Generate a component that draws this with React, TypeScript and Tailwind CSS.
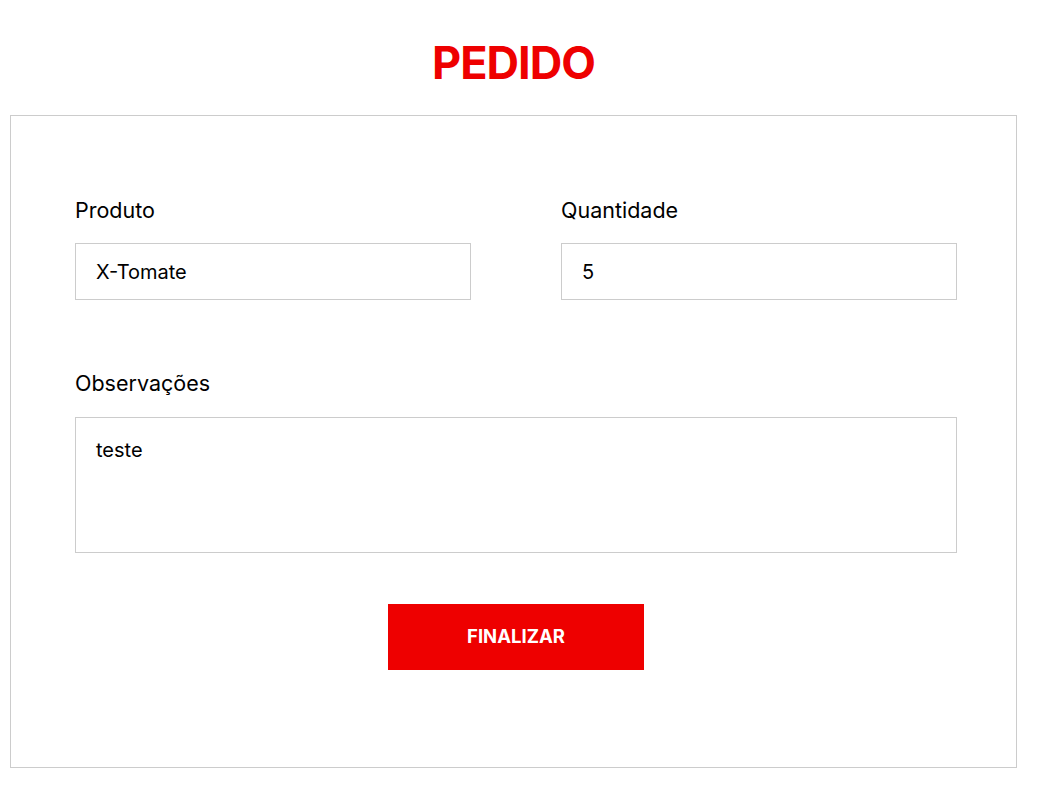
export default function App() {
  return (
    <div className="min-h-screen bg-white font-['Inter',sans-serif] text-black">
      <div className="ml-[10px] w-[1007px]">
        <h1 className="pt-[35px] text-center text-[45px] font-bold leading-[56px] tracking-[-1px] text-[#ee0000]">
          PEDIDO
        </h1>
        <form
          className="mt-[24px] border border-[#cccccc] pb-[97px] pl-[64px] pt-[79px]"
          onSubmit={(e) => e.preventDefault()}
        >
          <div className="w-[882px]">
            <div className="grid grid-cols-2 gap-x-[90px]">
              <div className="flex flex-col">
                <label className="mb-[18px] text-[21.5px] leading-[30px]">Produto</label>
                <input
                  defaultValue="X-Tomate"
                  className="h-[57px] border border-[#cccccc] px-[20px] text-[20px] outline-none"
                />
              </div>
              <div className="flex flex-col">
                <label className="mb-[18px] text-[21.5px] leading-[30px]">Quantidade</label>
                <input
                  defaultValue="5"
                  className="h-[57px] border border-[#cccccc] px-[20px] text-[20px] outline-none"
                />
              </div>
            </div>
            <div className="mt-[68px] flex flex-col">
              <label className="mb-[19px] text-[21.5px] leading-[30px]">Observações</label>
              <textarea
                defaultValue="teste"
                className="h-[136px] resize-none border border-[#cccccc] px-[20px] pb-[20px] pt-[19px] text-[20px] leading-[26px] outline-none"
              />
            </div>
            <div className="mt-[51px] flex justify-center">
              <button
                type="submit"
                className="h-[66px] w-[256px] bg-[#ee0000] text-[18.5px] font-bold text-white"
              >
                FINALIZAR
              </button>
            </div>
          </div>
        </form>
      </div>
    </div>
  );
}
